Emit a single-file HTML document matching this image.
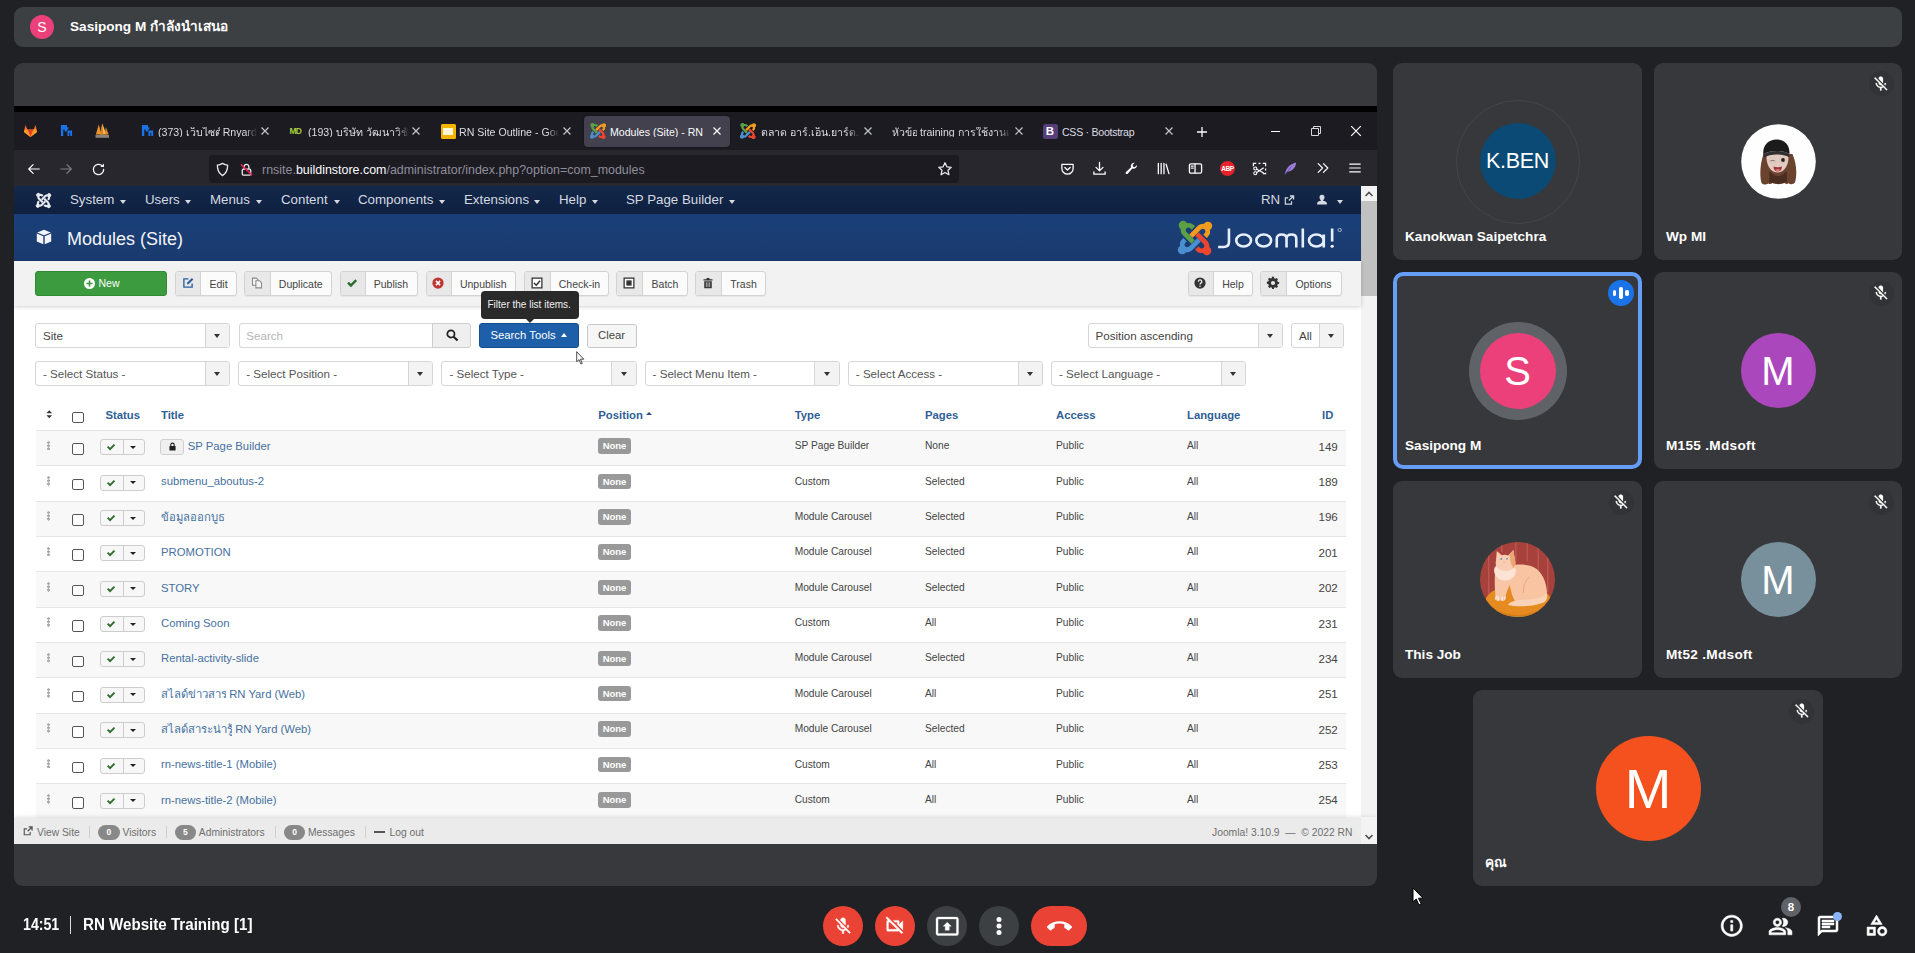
<!DOCTYPE html>
<html><head><meta charset="utf-8"><title>Meet</title><style>
*{box-sizing:border-box;margin:0;padding:0}
html,body{width:1915px;height:953px;overflow:hidden;background:#202124;font-family:"Liberation Sans",sans-serif;}
body{position:relative;color:#fff}
.abs{position:absolute}
.t{position:absolute;white-space:nowrap;line-height:1}
svg{position:absolute;overflow:visible}
#banner{left:14px;top:7px;width:1888px;height:40px;background:#3c4043;border-radius:9px}
#main{left:14px;top:63px;width:1363px;height:823px;background:#38393c;border-radius:9px;overflow:hidden}
.tile{position:absolute;background:#37383b;border-radius:9px}
.av{position:absolute;border-radius:50%;color:#fff;text-align:center}
.nm{position:absolute;left:12px;bottom:17px;font-size:13.6px;font-weight:bold;color:#fff;white-space:nowrap;line-height:1}
.mute{position:absolute;right:8px;top:8px;width:25px;height:25px;border-radius:50%;background:#323336}
.mute svg{left:3.7px;top:3.5px;width:17.6px;height:17.6px;fill:#fff}
#ss{left:0;top:43px;width:1363px;height:738px;background:#000;overflow:hidden}
.cbtn{position:absolute;top:906px;width:40px;height:40px;border-radius:50%}
.cbtn svg{left:10px;top:10px;width:20px;height:20px;fill:#fff}
.bi{fill:#fff;width:25px;height:25px}

.nmx{font-size:13.6px;font-weight:bold;color:#fff}
.mute{right:auto}

.tb{border:1px solid #d3d3d3;border-radius:3px;background:#fbfbfb;overflow:hidden;box-shadow:0 1px 1px rgba(0,0,0,.05)}
.tb i{position:absolute;left:0;top:0;bottom:0;background:#e8e8e8;border-right:1px solid #d3d3d3}
.tb b{position:absolute;right:0;top:0;bottom:0;text-align:center;font-weight:normal;font-size:10.5px;color:#444;line-height:24px}
.sl{border:1px solid #d6d6d6;border-radius:3px;background:#fff;overflow:hidden;font-size:11.6px;line-height:24px;white-space:nowrap}
.sl span{margin-left:7px}
.sl i{position:absolute;right:0;top:0;bottom:0;width:24.5px;background:#f3f3f3;border-left:1px solid #d6d6d6}
.sl i:after{content:"";position:absolute;left:8.5px;top:10px;border-left:3.5px solid transparent;border-right:3.5px solid transparent;border-top:4px solid #333}
.cb{width:11.5px;height:11.5px;border:1.3px solid #555;border-radius:2px;background:#fff}
.th{font-size:11.3px;font-weight:bold;color:#2f5f96}
.dh{width:5px;height:9.6px;background:radial-gradient(circle,#a8a8a8 1.1px,transparent 1.6px);background-size:5px 3.2px}
.sb2{width:45px;height:16px;border:1px solid #cdcdcd;border-radius:3px;background:#f7f7f7}
.sb2 i{position:absolute;left:22px;top:0;bottom:0;width:1px;background:#cdcdcd}
.sb2 u{position:absolute;left:29.5px;top:5.5px;border-left:3px solid transparent;border-right:3px solid transparent;border-top:3.5px solid #222}
.bdg{width:33px;height:15.5px;border-radius:3px;background:#999;color:#fff;font-size:9.5px;font-weight:bold;line-height:15.5px;text-align:center}
.sm{font-size:10.2px;color:#444}
.pl{width:21.5px;height:15.5px;border-radius:8px;background:#888;color:#fff;font-size:8.5px;font-weight:bold;line-height:15.5px;text-align:center}

.tw{display:inline-block;overflow-x:clip;overflow-y:visible;vertical-align:top;white-space:nowrap}
</style></head><body>
<div class="abs" id="banner"><div class="av" style="left:16px;top:8px;width:24px;height:24px;background:#ec407a;font-size:14px;line-height:24.5px">S</div><div class="t" style="left:56px;top:13px;font-size:13.6px;font-weight:bold">Sasipong M <span class="tw" style="width:77.5px">กำลังนำเสนอ</span></div></div>
<div class="abs" id="main"><div class="abs" id="ss">
<div class="abs" style="left:0;top:6px;width:1363px;height:38px;background:#1c1b22"></div><div class="abs" style="left:0;top:44px;width:1363px;height:36px;background:#28272e"></div><div class="abs" style="left:570px;top:9.5px;width:146px;height:31px;background:#42414d;border-radius:4px;box-shadow:0 0 2px rgba(0,0,0,.5)"></div><svg viewBox="0 0 16 16" style="left:8.5px;top:17px;width:15px;height:15px"><path d="M8 15L1 9.500l1.500-7.500 2.200 5h6.600l2.200-5L15 9.500z" fill="#fc6d26"/><path d="M8 15L4.700 7h6.600z" fill="#e24329"/><path d="M1 9.500L8 15 4.700 7H2z M15 9.500L8 15l3.300-8H14z" fill="#fca326" opacity=".9"/></svg><svg viewBox="0 0 14 14" style="left:45.5px;top:18px;width:13px;height:13px"><path d="M1 1h6.500v2.500H9V6H7.500v2H5V6H3.500v7H1z M8 7h5v6H11V9.500H10V13H8z" fill="#1a73e8"/></svg><svg viewBox="0 0 16 16" style="left:80px;top:16.5px;width:16px;height:16px"><path d="M4.800 1.500l2.700 10H1.800z" fill="#e9922f"/><path d="M8.300 .5l4.200 11H6.300z" fill="#f6c04f"/><path d="M8.300 .5l1 11H6.300z" fill="#d97f22"/><path d="M11.800 4l2.800 7.500h-3.600z" fill="#e88a2a"/><rect x="1.500" y="12" width="13.500" height="2.800" fill="#8d8378"/></svg><svg viewBox="0 0 14 14" style="left:126.5px;top:18px;width:13px;height:13px"><path d="M1 1h6.500v2.500H9V6H7.500v2H5V6H3.500v7H1z M8 7h5v6H11V9.500H10V13H8z" fill="#1a73e8"/></svg><div class="t" style="left:144px;top:20.8px;font-size:10.600px;color:#dcdce2;width:99px;overflow:hidden;-webkit-mask-image:linear-gradient(to right,#000 88%,transparent 100%);mask-image:linear-gradient(to right,#000 88%,transparent 100%);">(373) <span class="tw" style="width:34px">เว็บไซต์</span> Rnyard</div><svg viewBox="-6 -6 12 12" style="left:244.5px;top:19px;width:12px;height:12px"><path d="M-3.5-3.5L3.5 3.5M3.5-3.5L-3.5 3.5" stroke="#c4c4cc" stroke-width="1.2" fill="none"/></svg><div class="t" style="left:275.5px;top:21px;font-size:8.500px;font-weight:bold;color:#a4cf3a;letter-spacing:-.9px">MD</div><div class="t" style="left:294px;top:20.8px;font-size:10.600px;color:#dcdce2;width:101px;overflow:hidden;-webkit-mask-image:linear-gradient(to right,#000 88%,transparent 100%);mask-image:linear-gradient(to right,#000 88%,transparent 100%);">(193) บริษัท วัฒนาวิชั่น</div><svg viewBox="-6 -6 12 12" style="left:395.5px;top:19px;width:12px;height:12px"><path d="M-3.5-3.5L3.5 3.5M3.5-3.5L-3.5 3.5" stroke="#c4c4cc" stroke-width="1.2" fill="none"/></svg><div class="abs" style="left:426.5px;top:18px;width:15px;height:15px;background:#f4b400;border-radius:1.500px"><i class="abs" style="left:2.500px;top:4px;width:10px;height:7px;background:#fff7d6"></i></div><div class="t" style="left:445px;top:20.8px;font-size:10.600px;color:#dcdce2;width:100px;overflow:hidden;-webkit-mask-image:linear-gradient(to right,#000 88%,transparent 100%);mask-image:linear-gradient(to right,#000 88%,transparent 100%);">RN Site Outline - Goo</div><svg viewBox="-6 -6 12 12" style="left:546.5px;top:19px;width:12px;height:12px"><path d="M-3.5-3.5L3.5 3.5M3.5-3.5L-3.5 3.5" stroke="#c4c4cc" stroke-width="1.2" fill="none"/></svg><svg viewBox="-16 -16 32 32" style="left:576px;top:17px;width:16px;height:16px"><path transform="rotate(0)" fill="#5ba046" d="M-13.500-8.500a4.200 4.200 0 1 1 6-5.500c2-.600 4.500 0 6.200 1.700l1.300 1.300-3.200 3.200-1.300-1.300c-1-1-2.500-1-3.500 0s-1 2.500 0 3.500l7.800 7.800-3.200 3.200-7.800-7.800c-1.700-1.700-2.400-4-2.300-6.100z"/><path transform="rotate(90)" fill="#f29c1f" d="M-13.500-8.500a4.200 4.200 0 1 1 6-5.500c2-.600 4.500 0 6.200 1.700l1.300 1.300-3.200 3.200-1.300-1.300c-1-1-2.500-1-3.500 0s-1 2.500 0 3.500l7.800 7.800-3.200 3.200-7.800-7.800c-1.700-1.700-2.400-4-2.300-6.100z"/><path transform="rotate(180)" fill="#e9452f" d="M-13.500-8.500a4.200 4.200 0 1 1 6-5.500c2-.600 4.500 0 6.200 1.700l1.300 1.300-3.200 3.200-1.300-1.300c-1-1-2.500-1-3.500 0s-1 2.500 0 3.500l7.800 7.800-3.200 3.200-7.800-7.800c-1.700-1.700-2.400-4-2.300-6.100z"/><path transform="rotate(270)" fill="#4c8fd0" d="M-13.500-8.500a4.200 4.200 0 1 1 6-5.500c2-.600 4.500 0 6.200 1.700l1.300 1.300-3.200 3.200-1.300-1.300c-1-1-2.500-1-3.500 0s-1 2.500 0 3.500l7.800 7.800-3.200 3.200-7.800-7.800c-1.700-1.700-2.400-4-2.300-6.100z"/></svg><div class="t" style="left:596px;top:20.8px;font-size:10.600px;color:#fbfbfe;width:97px;overflow:hidden;">Modules (Site) - RN</div><svg viewBox="-6 -6 12 12" style="left:696.5px;top:19px;width:12px;height:12px"><path d="M-3.5-3.5L3.5 3.5M3.5-3.5L-3.5 3.5" stroke="#fbfbfe" stroke-width="1.2" fill="none"/></svg><svg viewBox="-16 -16 32 32" style="left:726px;top:17px;width:16px;height:16px"><path transform="rotate(0)" fill="#5ba046" d="M-13.500-8.500a4.200 4.200 0 1 1 6-5.500c2-.600 4.500 0 6.200 1.700l1.300 1.300-3.200 3.200-1.300-1.300c-1-1-2.500-1-3.500 0s-1 2.500 0 3.500l7.800 7.800-3.200 3.200-7.800-7.800c-1.700-1.700-2.400-4-2.300-6.100z"/><path transform="rotate(90)" fill="#f29c1f" d="M-13.500-8.500a4.200 4.200 0 1 1 6-5.500c2-.600 4.500 0 6.200 1.700l1.300 1.300-3.200 3.200-1.300-1.300c-1-1-2.500-1-3.500 0s-1 2.500 0 3.500l7.800 7.800-3.200 3.200-7.800-7.800c-1.700-1.700-2.400-4-2.300-6.100z"/><path transform="rotate(180)" fill="#e9452f" d="M-13.500-8.500a4.200 4.200 0 1 1 6-5.500c2-.600 4.500 0 6.200 1.700l1.300 1.300-3.200 3.200-1.300-1.300c-1-1-2.500-1-3.500 0s-1 2.500 0 3.500l7.800 7.800-3.200 3.200-7.800-7.800c-1.700-1.700-2.400-4-2.300-6.100z"/><path transform="rotate(270)" fill="#4c8fd0" d="M-13.500-8.500a4.200 4.200 0 1 1 6-5.500c2-.600 4.500 0 6.200 1.700l1.300 1.300-3.200 3.200-1.300-1.300c-1-1-2.500-1-3.500 0s-1 2.500 0 3.500l7.800 7.800-3.200 3.200-7.800-7.800c-1.700-1.700-2.400-4-2.300-6.100z"/></svg><div class="t" style="left:747px;top:20.8px;font-size:10.600px;color:#dcdce2;width:99px;overflow:hidden;-webkit-mask-image:linear-gradient(to right,#000 88%,transparent 100%);mask-image:linear-gradient(to right,#000 88%,transparent 100%);">ตลาด อาร์.เอ็น.ยาร์ด. โค</div><svg viewBox="-6 -6 12 12" style="left:847.5px;top:19px;width:12px;height:12px"><path d="M-3.5-3.5L3.5 3.5M3.5-3.5L-3.5 3.5" stroke="#c4c4cc" stroke-width="1.2" fill="none"/></svg><div class="t" style="left:878px;top:20.8px;font-size:10.600px;color:#dcdce2;width:119px;overflow:hidden;-webkit-mask-image:linear-gradient(to right,#000 88%,transparent 100%);mask-image:linear-gradient(to right,#000 88%,transparent 100%);"><span class="tw" style="width:25px">หัวข้อ</span> training การใช้งานเว็</div><svg viewBox="-6 -6 12 12" style="left:998.5px;top:19px;width:12px;height:12px"><path d="M-3.5-3.5L3.5 3.5M3.5-3.5L-3.5 3.5" stroke="#c4c4cc" stroke-width="1.2" fill="none"/></svg><div class="abs" style="left:1028.5px;top:17.5px;width:15px;height:15px;background:#563d7c;border-radius:2.500px;color:#fff;font-size:11.500px;font-weight:bold;line-height:15.500px;text-align:center">B</div><div class="t" style="left:1048px;top:20.8px;font-size:10.600px;color:#dcdce2;"><span style="letter-spacing:-.28px">CSS · Bootstrap</span></div><svg viewBox="-6 -6 12 12" style="left:1148.5px;top:19px;width:12px;height:12px"><path d="M-3.5-3.5L3.5 3.5M3.5-3.5L-3.5 3.5" stroke="#c4c4cc" stroke-width="1.2" fill="none"/></svg><svg viewBox="-6 -6 12 12" style="left:1181.5px;top:19.5px;width:12px;height:12px"><path d="M-5 0H5M0-5V5" stroke="#fbfbfe" stroke-width="1.300" fill="none"/></svg><div class="abs" style="left:1257px;top:24.5px;width:9px;height:1.200px;background:#fbfbfe"></div><svg viewBox="0 0 10 10" style="left:1296.5px;top:20px;width:10px;height:10px"><path d="M.5 2.500h7v7h-7z M2.500 2.500v-2h7v7h-2" stroke="#d8d8de" stroke-width="1" fill="none"/></svg><svg viewBox="-6 -6 12 12" style="left:1336px;top:19px;width:12px;height:12px"><path d="M-4.8-4.8L4.8 4.8M4.8-4.8L-4.8 4.8" stroke="#fbfbfe" stroke-width="1.2" fill="none"/></svg><svg viewBox="0 0 16 16" style="left:13px;top:56px;width:14px;height:14px;"><path d="M14 8H2.500M7 3L2 8l5 5" stroke="#fbfbfe" stroke-width="1.400" fill="none" stroke-linecap="round" stroke-linejoin="round"/></svg><svg viewBox="0 0 16 16" style="left:45px;top:56px;width:14px;height:14px;"><path d="M2 8h11.500M9 3l5 5-5 5" stroke="#7c7b86" stroke-width="1.400" fill="none" stroke-linecap="round" stroke-linejoin="round"/></svg><svg viewBox="0 0 16 16" style="left:77px;top:55.5px;width:15px;height:15px;"><path d="M13.500 8a5.500 5.500 0 1 1-1.700-4" stroke="#fbfbfe" stroke-width="1.400" fill="none" stroke-linecap="round" stroke-linejoin="round"/><path d="M13.800 1.500v3.800H10z" fill="#fbfbfe"/></svg><div class="abs" style="left:194.5px;top:48.5px;width:750.500px;height:28px;background:#1c1b22;border-radius:4px"></div><svg viewBox="0 0 16 16" style="left:200.5px;top:55.5px;width:15px;height:15px;"><path d="M8 1.500c2 1.300 3.800 1.800 5.500 1.800 0 5-1.500 9-5.500 11.200C4 12.300 2.500 8.300 2.500 3.300 4.200 3.300 6 2.800 8 1.500z" stroke="#e8e8ee" stroke-width="1.400" fill="none" stroke-linejoin="round"/></svg><svg viewBox="0 0 16 16" style="left:225px;top:55.5px;width:15px;height:15px;"><rect x="3.500" y="7.500" width="9" height="6.500" rx="1.200" stroke="#e8e8ee" stroke-width="1.400" fill="none"/><path d="M5.500 7.500V5a2.500 2.500 0 0 1 5 0v2.500" stroke="#e8e8ee" stroke-width="1.400" fill="none"/><path d="M2 2.500l12 11.500" stroke="#e22850" stroke-width="1.600"/></svg><div class="t" style="left:248px;top:58.2px;font-size:12.450px;color:#8f8e9c"><span>rnsite.</span><span style="color:#fbfbfe">buildinstore.com</span>/administrator/index.php?option=com_modules</div><svg viewBox="0 0 16 16" style="left:922.5px;top:54.5px;width:16px;height:16px;"><path d="M8 1.800l1.900 4 4.300.5-3.200 3 .9 4.400L8 11.500l-3.900 2.200.9-4.400-3.200-3 4.300-.5z" stroke="#e8e8ee" stroke-width="1.300" fill="none" stroke-linejoin="round"/></svg><svg viewBox="0 0 16 16" style="left:1046px;top:54.5px;width:15px;height:15px;"><path d="M2 3.500h12v4.500a6 6 0 0 1-12 0z" stroke="#fbfbfe" stroke-width="1.400" fill="none" stroke-linecap="round" stroke-linejoin="round"/><path d="M5.200 7l2.800 2.700L10.800 7" stroke="#fbfbfe" stroke-width="1.400" fill="none" stroke-linecap="round" stroke-linejoin="round"/></svg><svg viewBox="0 0 16 16" style="left:1077.5px;top:54.5px;width:15px;height:15px;"><path d="M8 1.500v8.500M4.300 6.800L8 10.500l3.700-3.700M2 11.500v2.500h12v-2.500" stroke="#fbfbfe" stroke-width="1.400" fill="none" stroke-linecap="round" stroke-linejoin="round"/></svg><svg viewBox="0 0 16 16" style="left:1109.5px;top:54.5px;width:15px;height:15px;"><path d="M13.800 4.200a3.600 3.600 0 0 1-4.900 3.900L4 13.500a1.300 1.300 0 0 1-1.900-1.900l5.400-4.900a3.600 3.600 0 0 1 3.900-4.900L9.300 4l.4 2 2 .4z" fill="#fbfbfe"/></svg><svg viewBox="0 0 16 16" style="left:1141.5px;top:54.5px;width:15px;height:15px;"><path d="M2.500 2.500v11M5.500 2.500v11M8.500 2.500v11M10.800 3.500l3 10" stroke="#fbfbfe" stroke-width="1.400" fill="none" stroke-linecap="round" stroke-linejoin="round"/></svg><svg viewBox="0 0 16 16" style="left:1173.5px;top:54.5px;width:15px;height:15px;"><rect x="1.500" y="3" width="13" height="10" rx="1.500" stroke="#fbfbfe" stroke-width="1.400" fill="none" stroke-linecap="round" stroke-linejoin="round"/><path d="M7.500 3v10M3.500 5.500h2M3.500 7.500h2" stroke="#fbfbfe" stroke-width="1.400" fill="none" stroke-linecap="round" stroke-linejoin="round"/></svg><div class="abs" style="left:1206px;top:55px;width:15px;height:15px;border-radius:50%;background:#e8222d;color:#fff;font-size:6.500px;font-weight:bold;line-height:15.500px;text-align:center;letter-spacing:-.4px">ABP</div><svg viewBox="0 0 16 16" style="left:1237.5px;top:54.5px;width:15px;height:15px;"><path d="M1.500 5.500v-3h3M7 2.500h2M11.500 2.500h3v3M14.500 8v2M14.500 12.500v1h-3" stroke="#fbfbfe" stroke-width="1.300" fill="none"/><circle cx="3.500" cy="8" r="1.600" stroke="#fbfbfe" stroke-width="1.200" fill="none"/><circle cx="3.500" cy="13" r="1.600" stroke="#fbfbfe" stroke-width="1.200" fill="none"/><path d="M5 8.800l7.500 4M5 12.200l7.500-5" stroke="#fbfbfe" stroke-width="1.200"/></svg><svg viewBox="0 0 16 16" style="left:1269px;top:54.5px;width:15px;height:15px;"><path d="M2 14c1-6 5-11 12-12.500C13.500 8 9 11 4.500 11.500z" fill="#9b7fd6"/><path d="M2 14.500L9 6" stroke="#6a4fb0" stroke-width="1"/></svg><svg viewBox="0 0 16 16" style="left:1301.5px;top:55.3px;width:14px;height:14px;"><path d="M2.500 3l5 5-5 5M8.500 3l5 5-5 5" stroke="#fbfbfe" stroke-width="1.400" fill="none" stroke-linecap="round" stroke-linejoin="round"/></svg><svg viewBox="0 0 16 16" style="left:1333.5px;top:55.3px;width:14px;height:14px;"><path d="M2 3.500h12M2 8h12M2 12.500h12" stroke="#fbfbfe" stroke-width="1.400" fill="none" stroke-linecap="round" stroke-linejoin="round"/></svg>
<div class="abs" style="left:0;top:80px;width:1347px;height:658px;background:#fff"></div><div class="abs" style="left:1347px;top:80px;width:16px;height:658px;background:#f3f3f3"></div><div class="abs" style="left:1347px;top:95px;width:16px;height:95px;background:#c1c1c1"></div><svg viewBox="0 0 16 14" style="left:1347px;top:81px;width:16px;height:14px"><path d="M4.500 9L8 5.500 11.500 9" stroke="#505050" stroke-width="1.600" fill="none"/></svg><svg viewBox="0 0 16 14" style="left:1347px;top:724px;width:16px;height:14px"><path d="M4.500 5L8 8.500 11.500 5" stroke="#505050" stroke-width="1.600" fill="none"/></svg><div class="abs" style="left:0;top:80px;width:1347px;height:28px;background:linear-gradient(#13284a,#0f2040)"></div><div class="abs" style="left:0;top:108px;width:1347px;height:47px;background:linear-gradient(#1a4079,#1a3a6e)"></div><svg viewBox="-16 -16 32 32" style="left:21.5px;top:86.5px;width:15px;height:15px"><path transform="rotate(0)" fill="#e6e9ee" d="M-13.500-8.500a4.200 4.200 0 1 1 6-5.500c2-.600 4.500 0 6.200 1.700l1.300 1.300-3.200 3.200-1.300-1.300c-1-1-2.500-1-3.500 0s-1 2.500 0 3.500l7.800 7.800-3.200 3.200-7.800-7.800c-1.700-1.700-2.400-4-2.300-6.100z"/><path transform="rotate(90)" fill="#e6e9ee" d="M-13.500-8.500a4.200 4.200 0 1 1 6-5.500c2-.600 4.500 0 6.200 1.700l1.300 1.300-3.200 3.200-1.300-1.300c-1-1-2.500-1-3.500 0s-1 2.500 0 3.500l7.800 7.800-3.200 3.200-7.800-7.800c-1.700-1.700-2.400-4-2.300-6.100z"/><path transform="rotate(180)" fill="#e6e9ee" d="M-13.500-8.500a4.200 4.200 0 1 1 6-5.500c2-.600 4.500 0 6.200 1.700l1.300 1.300-3.200 3.200-1.300-1.300c-1-1-2.500-1-3.500 0s-1 2.500 0 3.500l7.800 7.800-3.200 3.200-7.800-7.800c-1.700-1.700-2.400-4-2.300-6.100z"/><path transform="rotate(270)" fill="#e6e9ee" d="M-13.500-8.500a4.200 4.200 0 1 1 6-5.500c2-.600 4.500 0 6.200 1.700l1.300 1.300-3.200 3.200-1.300-1.300c-1-1-2.500-1-3.500 0s-1 2.500 0 3.500l7.800 7.800-3.200 3.200-7.800-7.800c-1.700-1.700-2.400-4-2.300-6.100z"/></svg><div class="t" style="left:56px;top:87.2px;font-size:13.300px;color:#d5d9e0">System</div><div class="abs" style="left:105.5px;top:93.5px;border-left:3.500px solid transparent;border-right:3.500px solid transparent;border-top:4px solid #d5d9e0"></div><div class="t" style="left:131px;top:87.2px;font-size:13.300px;color:#d5d9e0">Users</div><div class="abs" style="left:170.5px;top:93.5px;border-left:3.500px solid transparent;border-right:3.500px solid transparent;border-top:4px solid #d5d9e0"></div><div class="t" style="left:196px;top:87.2px;font-size:13.300px;color:#d5d9e0">Menus</div><div class="abs" style="left:241.5px;top:93.5px;border-left:3.500px solid transparent;border-right:3.500px solid transparent;border-top:4px solid #d5d9e0"></div><div class="t" style="left:267px;top:87.2px;font-size:13.300px;color:#d5d9e0">Content</div><div class="abs" style="left:319.5px;top:93.5px;border-left:3.500px solid transparent;border-right:3.500px solid transparent;border-top:4px solid #d5d9e0"></div><div class="t" style="left:344px;top:87.2px;font-size:13.300px;color:#d5d9e0">Components</div><div class="abs" style="left:424.5px;top:93.5px;border-left:3.500px solid transparent;border-right:3.500px solid transparent;border-top:4px solid #d5d9e0"></div><div class="t" style="left:450px;top:87.2px;font-size:13.300px;color:#d5d9e0">Extensions</div><div class="abs" style="left:519.5px;top:93.5px;border-left:3.500px solid transparent;border-right:3.500px solid transparent;border-top:4px solid #d5d9e0"></div><div class="t" style="left:545px;top:87.2px;font-size:13.300px;color:#d5d9e0">Help</div><div class="abs" style="left:577.5px;top:93.5px;border-left:3.500px solid transparent;border-right:3.500px solid transparent;border-top:4px solid #d5d9e0"></div><div class="t" style="left:612px;top:87.2px;font-size:13.300px;color:#d5d9e0">SP Page Builder</div><div class="abs" style="left:714.5px;top:93.5px;border-left:3.500px solid transparent;border-right:3.500px solid transparent;border-top:4px solid #d5d9e0"></div><div class="t" style="left:1247px;top:87.2px;font-size:13.300px;color:#d5d9e0">RN</div><svg viewBox="0 0 16 16" style="left:1270px;top:89px;width:10.500px;height:10.500px"><path d="M9 1.500h5.500V7M14.500 1.500L7.500 8.500" stroke="#d5d9e0" stroke-width="2" fill="none"/><path d="M11.500 9.500v4.500h-9.500v-9.500h4.500" stroke="#d5d9e0" stroke-width="1.800" fill="none"/></svg><svg viewBox="0 0 16 16" style="left:1302px;top:88px;width:12px;height:12px"><path d="M8 1a3.300 3.300 0 0 1 3.300 3.500c0 1.600-.9 3-1.800 3.600v.9c2 .4 5 1.400 5 3.300V14h-13v-1.700c0-1.900 3-2.900 5-3.300v-.9c-.9-.6-1.800-2-1.800-3.600A3.300 3.300 0 0 1 8 1z" fill="#d5d9e0"/></svg><div class="abs" style="left:1322.5px;top:93.5px;border-left:3.500px solid transparent;border-right:3.500px solid transparent;border-top:4px solid #d5d9e0"></div><svg viewBox="0 0 16 16" style="left:22px;top:123px;width:16px;height:16px"><path d="M8 .8l6.800 2.700L8 6.300 1.200 3.500z M.8 4.600l6.500 2.700v8L.8 12.500z M15.200 4.600L8.700 7.300v8l6.500-2.800z" fill="#f2f4f7"/></svg><div class="t" style="left:53px;top:123.8px;font-size:18px;color:#f2f4f7">Modules (Site)</div><svg viewBox="-16 -16 32 32" style="left:1164px;top:115px;width:34px;height:34px"><path transform="rotate(0)" fill="#5ba046" d="M-13.500-8.500a4.200 4.200 0 1 1 6-5.500c2-.600 4.500 0 6.200 1.700l1.300 1.300-3.200 3.200-1.300-1.300c-1-1-2.500-1-3.500 0s-1 2.500 0 3.500l7.800 7.800-3.200 3.200-7.800-7.800c-1.700-1.700-2.400-4-2.300-6.100z"/><path transform="rotate(90)" fill="#f29c1f" d="M-13.500-8.500a4.200 4.200 0 1 1 6-5.500c2-.600 4.500 0 6.200 1.700l1.300 1.300-3.200 3.200-1.300-1.300c-1-1-2.500-1-3.500 0s-1 2.500 0 3.500l7.800 7.800-3.200 3.200-7.800-7.800c-1.700-1.700-2.400-4-2.300-6.100z"/><path transform="rotate(180)" fill="#e9452f" d="M-13.500-8.500a4.200 4.200 0 1 1 6-5.500c2-.600 4.500 0 6.200 1.700l1.300 1.300-3.200 3.200-1.300-1.300c-1-1-2.500-1-3.500 0s-1 2.500 0 3.500l7.800 7.800-3.200 3.200-7.800-7.800c-1.700-1.700-2.400-4-2.300-6.100z"/><path transform="rotate(270)" fill="#4c8fd0" d="M-13.500-8.500a4.200 4.200 0 1 1 6-5.500c2-.600 4.500 0 6.200 1.700l1.300 1.300-3.200 3.200-1.300-1.300c-1-1-2.500-1-3.500 0s-1 2.500 0 3.500l7.800 7.800-3.200 3.200-7.800-7.800c-1.700-1.700-2.400-4-2.300-6.100z"/></svg><svg viewBox="0 0 116 24" preserveAspectRatio="none" style="left:1203px;top:120.5px;width:126px;height:24px"><g stroke="#e6eefb" stroke-width="2.400" fill="none" stroke-linecap="butt"><path d="M11 1.500v13.500c0 3.300-2 5-5 5H1"/><ellipse cx="24.500" cy="13.500" rx="6.800" ry="6"/><ellipse cx="43" cy="13.500" rx="6.800" ry="6"/><path d="M55 20.500v-9c0-2.500 1.500-4 4.500-4s4.500 1.500 4.500 4v9M64 11.500c0-2.500 1.500-4 4.500-4s4.500 1.500 4.500 4v9"/><path d="M79 1.500v19"/><ellipse cx="91.500" cy="13.500" rx="6.800" ry="6"/><path d="M98.300 7.500v13"/><path d="M106 1.500v13"/></g><circle cx="106" cy="19.300" r="1.500" fill="#f2f4f7"/><circle cx="113" cy="3" r="1.600" stroke="#cfd6e2" stroke-width=".700" fill="none"/></svg><div class="abs" style="left:0;top:155px;width:1347px;height:45px;background:#f2f2f2;box-shadow:0 1px 4px rgba(0,0,0,.18)"></div><div class="abs" style="left:21px;top:165px;width:132px;height:24.500px;background:#3c9a3f;border:1px solid #2f8a33;border-radius:3px"></div><svg viewBox="0 0 16 16" style="left:70px;top:171.5px;width:11px;height:11px"><circle cx="8" cy="8" r="8" fill="#fff"/><path d="M8 3.500v9M3.500 8h9" stroke="#3c9a3f" stroke-width="2.400"/></svg><div class="t" style="left:84.5px;top:172px;font-size:10.500px;color:#fff">New</div><div class="abs tb" style="left:161px;top:165.2px;width:62px;height:24.500px"><i style="width:25px"></i><b style="left:25px">Edit</b></div><svg viewBox="0 0 16 16" style="left:167.5px;top:170.5px;width:12px;height:12px"><path d="M13.500 8.500v5h-11v-11h6" stroke="#2b5f9c" stroke-width="1.800" fill="none"/><path d="M6.500 10l.6-2.600 6-6 2 2-6 6z" fill="#2b5f9c"/></svg><div class="abs tb" style="left:230px;top:165.2px;width:88px;height:24.500px"><i style="width:25.5px"></i><b style="left:25.5px">Duplicate</b></div><svg viewBox="0 0 16 16" style="left:236.75px;top:170.5px;width:12px;height:12px"><path d="M2 1.500h5l2.500 2.500v7H2z" stroke="#888" stroke-width="1.400" fill="#f4f4f4"/><path d="M6.500 5h5l2.500 2.500v7H6.500z" stroke="#888" stroke-width="1.400" fill="#f4f4f4"/></svg><div class="abs tb" style="left:325.5px;top:165.2px;width:78px;height:24.500px"><i style="width:25px"></i><b style="left:25px">Publish</b></div><svg viewBox="0 0 16 16" style="left:332px;top:170.5px;width:12px;height:12px"><path d="M1.500 8.500l2.200-2.200 2.800 2.800 6-6L14.700 5.300 6.500 13.500z" fill="#2f6d2f"/></svg><div class="abs tb" style="left:411.5px;top:165.2px;width:90px;height:24.500px"><i style="width:25.5px"></i><b style="left:25.5px">Unpublish</b></div><svg viewBox="0 0 16 16" style="left:418.25px;top:170.5px;width:12px;height:12px"><circle cx="8" cy="8" r="7.500" fill="#bd362f"/><path d="M5.200 5.200l5.600 5.600M10.800 5.200l-5.600 5.600" stroke="#fff" stroke-width="2"/></svg><div class="abs tb" style="left:510px;top:165.2px;width:85px;height:24.500px"><i style="width:26px"></i><b style="left:26px">Check-in</b></div><svg viewBox="0 0 16 16" style="left:517px;top:170.5px;width:12px;height:12px"><rect x="1.500" y="1.500" width="13" height="13" stroke="#333" stroke-width="1.700" fill="#fff"/><path d="M4 8l3 3 5-6" stroke="#333" stroke-width="2" fill="none"/></svg><div class="abs tb" style="left:602px;top:165.2px;width:72px;height:24.500px"><i style="width:26px"></i><b style="left:26px">Batch</b></div><svg viewBox="0 0 16 16" style="left:609px;top:170.5px;width:12px;height:12px"><rect x="1.500" y="1.500" width="13" height="13" stroke="#333" stroke-width="1.700" fill="#fff"/><rect x="4.500" y="4.500" width="7" height="7" fill="#333"/></svg><div class="abs tb" style="left:680.5px;top:165.2px;width:71.5px;height:24.500px"><i style="width:26.5px"></i><b style="left:26.5px">Trash</b></div><svg viewBox="0 0 16 16" style="left:687.75px;top:170.5px;width:12px;height:12px"><path d="M2 3h12v1.800H2z M6 1.200h4V3H6z M3 5.500h10V15H3z" fill="#333"/><path d="M5.800 7v6.500M8 7v6.500M10.200 7v6.500" stroke="#e9e9e9" stroke-width=".900"/></svg><div class="abs tb" style="left:1173.5px;top:165.2px;width:65.5px;height:24.500px"><i style="width:25.5px"></i><b style="left:25.5px">Help</b></div><svg viewBox="0 0 16 16" style="left:1180.25px;top:170.5px;width:12px;height:12px"><circle cx="8" cy="8" r="7.500" fill="#333"/><path d="M5.800 6.200a2.300 2.300 0 1 1 3.400 2c-.8.500-1.200.9-1.200 1.800" stroke="#f0f0f0" stroke-width="1.700" fill="none"/><circle cx="8" cy="12.200" r="1" fill="#f0f0f0"/></svg><div class="abs tb" style="left:1246px;top:165.2px;width:81.5px;height:24.500px"><i style="width:25.5px"></i><b style="left:25.5px">Options</b></div><svg viewBox="0 0 16 16" style="left:1252.75px;top:170.5px;width:12px;height:12px"><path d="M8 0l1.200.2.500 2 1.400.6 1.800-1 1.700 1.700-1 1.800.6 1.400 2 .5v2.400l-2 .5-.6 1.400 1 1.800-1.700 1.700-1.800-1-1.400.6-.5 2H6.800l-.5-2-1.400-.6-1.800 1-1.700-1.700 1-1.800-.6-1.400-2-.5V6.800l2-.5.6-1.400-1-1.800 1.700-1.700 1.800 1 1.400-.6.5-2z" fill="#333" transform="translate(0 -.5)"/><circle cx="8" cy="8" r="2.800" fill="#e9e9e9"/></svg><div class="abs sl" style="left:21px;top:217px;width:195px;height:24.500px"><span style="color:#444">Site</span><i></i></div><div class="abs sl" style="left:225.3px;top:217px;width:194px;height:24.500px;border-radius:3px 0 0 3px"><span style="color:#b5b5b5;margin-left:6px">Search</span></div><div class="abs" style="left:418.3px;top:217px;width:39px;height:24.500px;border:1px solid #cdcdcd;border-radius:0 3px 3px 0;background:#efefef"></div><svg viewBox="0 0 16 16" style="left:432px;top:223px;width:12.500px;height:12.500px"><circle cx="6.300" cy="6.300" r="4.600" stroke="#222" stroke-width="2.200" fill="none"/><path d="M9.800 9.800l5 5" stroke="#222" stroke-width="2.800"/></svg><div class="abs" style="left:464.5px;top:216.5px;width:100px;height:25.500px;background:#1d5fa8;border:1px solid #174e8c;border-radius:3px"></div><div class="t" style="left:476.5px;top:224px;font-size:11.300px;color:#fff">Search Tools</div><div class="abs" style="left:547px;top:227px;border-left:3.500px solid transparent;border-right:3.500px solid transparent;border-bottom:4px solid #fff"></div><div class="abs" style="left:573px;top:217.5px;width:49.500px;height:24px;background:#f6f6f6;border:1px solid #c8c8c8;border-radius:3px"></div><div class="t" style="left:584px;top:224px;font-size:11.300px;color:#444">Clear</div><div class="abs" style="left:466.5px;top:185px;width:98px;height:28px;background:#2a2a2a;border-radius:4px"></div><div class="abs" style="left:511.5px;top:213px;border-left:4px solid transparent;border-right:4px solid transparent;border-top:4px solid #2a2a2a"></div><div class="t" style="left:473.5px;top:194px;font-size:10px;color:#f0f0f0">Filter the list items.</div><div class="abs sl" style="left:1073.5px;top:217px;width:195.5px;height:24.500px"><span style="color:#444">Position ascending</span><i></i></div><div class="abs sl" style="left:1277px;top:217px;width:53.2px;height:24.500px"><span style="color:#444">All</span><i></i></div><div class="abs sl" style="left:21px;top:255px;width:195.3px;height:24.500px"><span style="color:#555">- Select Status -</span><i></i></div><div class="abs sl" style="left:224.2px;top:255px;width:195.3px;height:24.500px"><span style="color:#555">- Select Position -</span><i></i></div><div class="abs sl" style="left:427.4px;top:255px;width:195.3px;height:24.500px"><span style="color:#555">- Select Type -</span><i></i></div><div class="abs sl" style="left:630.6px;top:255px;width:195.3px;height:24.500px"><span style="color:#555">- Select Menu Item -</span><i></i></div><div class="abs sl" style="left:833.8px;top:255px;width:195.3px;height:24.500px"><span style="color:#555">- Select Access -</span><i></i></div><div class="abs sl" style="left:1037px;top:255px;width:195.3px;height:24.500px"><span style="color:#555">- Select Language -</span><i></i></div><svg viewBox="0 0 9 14" style="left:561.5px;top:244.5px;width:9px;height:14px"><path d="M.7.700v10l2.300-2 1.900 4.300 1.400-.6L4.400 8.200H7.800z" fill="#fff" stroke="#222" stroke-width=".800"/></svg><svg viewBox="0 0 8 10" style="left:31.5px;top:303.5px;width:6.500px;height:8.500px"><path d="M4 0l3.500 3.800h-7z M4 10L.5 6.200h7z" fill="#333"/></svg><div class="abs cb" style="left:58px;top:305.5px"></div><div class="t th" style="left:91.5px;top:303.6px">Status</div><div class="t th" style="left:147px;top:303.6px">Title</div><div class="t th" style="left:584.3px;top:303.6px">Position</div><div class="t th" style="left:780.7px;top:303.6px">Type</div><div class="t th" style="left:911px;top:303.6px">Pages</div><div class="t th" style="left:1042px;top:303.6px">Access</div><div class="t th" style="left:1173px;top:303.6px">Language</div><div class="t th" style="left:1308px;top:303.6px">ID</div><div class="abs" style="left:632px;top:306px;border-left:3px solid transparent;border-right:3px solid transparent;border-bottom:3.500px solid #2b4f7d"></div><div class="abs" style="left:22px;top:323.8px;width:1310px;height:35.36px;border-top:1px solid #e6e6e6;background:#f8f8f8"></div><div class="abs dh" style="left:32.3px;top:334.6px"></div><div class="abs cb" style="left:58px;top:337.4px"></div><div class="abs sb2" style="left:85.5px;top:333.3px"><i></i><u></u></div><svg viewBox="0 0 16 16" style="left:91.5px;top:336.3px;width:10px;height:10px"><path d="M1.500 8.500l2.200-2.200 2.800 2.800 6-6L14.700 5.300 6.500 13.500z" fill="#2f6d2f"/></svg><div class="abs" style="left:146.3px;top:333.4px;width:24px;height:15.500px;border:1px solid #d0d0d0;border-radius:3px;background:#f0f0f0"></div><svg viewBox="0 0 16 16" style="left:153.8px;top:336px;width:9px;height:9px"><rect x="2.500" y="7" width="11" height="8" rx="1" fill="#222"/><path d="M5 7V5a3 3 0 0 1 6 0v2" stroke="#222" stroke-width="2" fill="none"/></svg><div class="t" style="left:173.8px;top:335.1px;font-size:11.300px;color:#46719f">SP Page Builder</div><div class="abs bdg" style="left:584px;top:332.4px">None</div><div class="t sm" style="left:780.7px;top:335.3px">SP Page Builder</div><div class="t sm" style="left:911px;top:335.3px">None</div><div class="t sm" style="left:1042px;top:335.3px">Public</div><div class="t sm" style="left:1173px;top:335.3px">All</div><div class="t" style="left:1304.3px;top:334.7px;width:19.500px;text-align:right;font-size:11.600px;color:#444">149</div><div class="abs" style="left:22px;top:359.16px;width:1310px;height:35.36px;border-top:1px solid #e6e6e6;background:#fff"></div><div class="abs dh" style="left:32.3px;top:369.96px"></div><div class="abs cb" style="left:58px;top:372.76px"></div><div class="abs sb2" style="left:85.5px;top:368.66px"><i></i><u></u></div><svg viewBox="0 0 16 16" style="left:91.5px;top:371.66px;width:10px;height:10px"><path d="M1.500 8.500l2.200-2.200 2.800 2.800 6-6L14.700 5.300 6.500 13.500z" fill="#2f6d2f"/></svg><div class="t" style="left:147px;top:370.46px;font-size:11.300px;color:#46719f">submenu_aboutus-2</div><div class="abs bdg" style="left:584px;top:367.76px">None</div><div class="t sm" style="left:780.7px;top:370.66px">Custom</div><div class="t sm" style="left:911px;top:370.66px">Selected</div><div class="t sm" style="left:1042px;top:370.66px">Public</div><div class="t sm" style="left:1173px;top:370.66px">All</div><div class="t" style="left:1304.3px;top:370.06px;width:19.500px;text-align:right;font-size:11.600px;color:#444">189</div><div class="abs" style="left:22px;top:394.52px;width:1310px;height:35.36px;border-top:1px solid #e6e6e6;background:#f8f8f8"></div><div class="abs dh" style="left:32.3px;top:405.32px"></div><div class="abs cb" style="left:58px;top:408.12px"></div><div class="abs sb2" style="left:85.5px;top:404.02px"><i></i><u></u></div><svg viewBox="0 0 16 16" style="left:91.5px;top:407.02px;width:10px;height:10px"><path d="M1.500 8.500l2.200-2.200 2.800 2.800 6-6L14.700 5.300 6.500 13.500z" fill="#2f6d2f"/></svg><div class="t" style="left:147px;top:405.82px;font-size:11.300px;color:#46719f"><span class="tw" style="width:63.5px">ข้อมูลออกบูธ</span></div><div class="abs bdg" style="left:584px;top:403.12px">None</div><div class="t sm" style="left:780.7px;top:406.02px">Module Carousel</div><div class="t sm" style="left:911px;top:406.02px">Selected</div><div class="t sm" style="left:1042px;top:406.02px">Public</div><div class="t sm" style="left:1173px;top:406.02px">All</div><div class="t" style="left:1304.3px;top:405.42px;width:19.500px;text-align:right;font-size:11.600px;color:#444">196</div><div class="abs" style="left:22px;top:429.88px;width:1310px;height:35.36px;border-top:1px solid #e6e6e6;background:#fff"></div><div class="abs dh" style="left:32.3px;top:440.68px"></div><div class="abs cb" style="left:58px;top:443.48px"></div><div class="abs sb2" style="left:85.5px;top:439.38px"><i></i><u></u></div><svg viewBox="0 0 16 16" style="left:91.5px;top:442.38px;width:10px;height:10px"><path d="M1.500 8.500l2.200-2.200 2.800 2.800 6-6L14.700 5.300 6.500 13.500z" fill="#2f6d2f"/></svg><div class="t" style="left:147px;top:441.18px;font-size:11.300px;color:#46719f">PROMOTION</div><div class="abs bdg" style="left:584px;top:438.48px">None</div><div class="t sm" style="left:780.7px;top:441.38px">Module Carousel</div><div class="t sm" style="left:911px;top:441.38px">Selected</div><div class="t sm" style="left:1042px;top:441.38px">Public</div><div class="t sm" style="left:1173px;top:441.38px">All</div><div class="t" style="left:1304.3px;top:440.78px;width:19.500px;text-align:right;font-size:11.600px;color:#444">201</div><div class="abs" style="left:22px;top:465.24px;width:1310px;height:35.36px;border-top:1px solid #e6e6e6;background:#f8f8f8"></div><div class="abs dh" style="left:32.3px;top:476.04px"></div><div class="abs cb" style="left:58px;top:478.84px"></div><div class="abs sb2" style="left:85.5px;top:474.74px"><i></i><u></u></div><svg viewBox="0 0 16 16" style="left:91.5px;top:477.74px;width:10px;height:10px"><path d="M1.500 8.500l2.200-2.200 2.800 2.800 6-6L14.700 5.300 6.500 13.500z" fill="#2f6d2f"/></svg><div class="t" style="left:147px;top:476.54px;font-size:11.300px;color:#46719f">STORY</div><div class="abs bdg" style="left:584px;top:473.84px">None</div><div class="t sm" style="left:780.7px;top:476.74px">Module Carousel</div><div class="t sm" style="left:911px;top:476.74px">Selected</div><div class="t sm" style="left:1042px;top:476.74px">Public</div><div class="t sm" style="left:1173px;top:476.74px">All</div><div class="t" style="left:1304.3px;top:476.14px;width:19.500px;text-align:right;font-size:11.600px;color:#444">202</div><div class="abs" style="left:22px;top:500.6px;width:1310px;height:35.36px;border-top:1px solid #e6e6e6;background:#fff"></div><div class="abs dh" style="left:32.3px;top:511.4px"></div><div class="abs cb" style="left:58px;top:514.2px"></div><div class="abs sb2" style="left:85.5px;top:510.1px"><i></i><u></u></div><svg viewBox="0 0 16 16" style="left:91.5px;top:513.1px;width:10px;height:10px"><path d="M1.500 8.500l2.200-2.200 2.800 2.800 6-6L14.700 5.300 6.500 13.500z" fill="#2f6d2f"/></svg><div class="t" style="left:147px;top:511.9px;font-size:11.300px;color:#46719f">Coming Soon</div><div class="abs bdg" style="left:584px;top:509.2px">None</div><div class="t sm" style="left:780.7px;top:512.1px">Custom</div><div class="t sm" style="left:911px;top:512.1px">All</div><div class="t sm" style="left:1042px;top:512.1px">Public</div><div class="t sm" style="left:1173px;top:512.1px">All</div><div class="t" style="left:1304.3px;top:511.5px;width:19.500px;text-align:right;font-size:11.600px;color:#444">231</div><div class="abs" style="left:22px;top:535.96px;width:1310px;height:35.36px;border-top:1px solid #e6e6e6;background:#f8f8f8"></div><div class="abs dh" style="left:32.3px;top:546.76px"></div><div class="abs cb" style="left:58px;top:549.56px"></div><div class="abs sb2" style="left:85.5px;top:545.46px"><i></i><u></u></div><svg viewBox="0 0 16 16" style="left:91.5px;top:548.46px;width:10px;height:10px"><path d="M1.500 8.500l2.200-2.200 2.800 2.800 6-6L14.700 5.300 6.500 13.500z" fill="#2f6d2f"/></svg><div class="t" style="left:147px;top:547.26px;font-size:11.300px;color:#46719f">Rental-activity-slide</div><div class="abs bdg" style="left:584px;top:544.56px">None</div><div class="t sm" style="left:780.7px;top:547.46px">Module Carousel</div><div class="t sm" style="left:911px;top:547.46px">Selected</div><div class="t sm" style="left:1042px;top:547.46px">Public</div><div class="t sm" style="left:1173px;top:547.46px">All</div><div class="t" style="left:1304.3px;top:546.86px;width:19.500px;text-align:right;font-size:11.600px;color:#444">234</div><div class="abs" style="left:22px;top:571.32px;width:1310px;height:35.36px;border-top:1px solid #e6e6e6;background:#fff"></div><div class="abs dh" style="left:32.3px;top:582.12px"></div><div class="abs cb" style="left:58px;top:584.92px"></div><div class="abs sb2" style="left:85.5px;top:580.82px"><i></i><u></u></div><svg viewBox="0 0 16 16" style="left:91.5px;top:583.82px;width:10px;height:10px"><path d="M1.500 8.500l2.200-2.200 2.800 2.800 6-6L14.700 5.300 6.500 13.500z" fill="#2f6d2f"/></svg><div class="t" style="left:147px;top:582.62px;font-size:11.300px;color:#46719f"><span class="tw" style="width:65px">สไลด์ข่าวสาร</span> RN Yard (Web)</div><div class="abs bdg" style="left:584px;top:579.92px">None</div><div class="t sm" style="left:780.7px;top:582.82px">Module Carousel</div><div class="t sm" style="left:911px;top:582.82px">All</div><div class="t sm" style="left:1042px;top:582.82px">Public</div><div class="t sm" style="left:1173px;top:582.82px">All</div><div class="t" style="left:1304.3px;top:582.22px;width:19.500px;text-align:right;font-size:11.600px;color:#444">251</div><div class="abs" style="left:22px;top:606.68px;width:1310px;height:35.36px;border-top:1px solid #e6e6e6;background:#f8f8f8"></div><div class="abs dh" style="left:32.3px;top:617.48px"></div><div class="abs cb" style="left:58px;top:620.28px"></div><div class="abs sb2" style="left:85.5px;top:616.18px"><i></i><u></u></div><svg viewBox="0 0 16 16" style="left:91.5px;top:619.18px;width:10px;height:10px"><path d="M1.500 8.500l2.200-2.200 2.800 2.800 6-6L14.700 5.300 6.500 13.500z" fill="#2f6d2f"/></svg><div class="t" style="left:147px;top:617.98px;font-size:11.300px;color:#46719f"><span class="tw" style="width:71px">สไลด์สาระน่ารู้</span> RN Yard (Web)</div><div class="abs bdg" style="left:584px;top:615.28px">None</div><div class="t sm" style="left:780.7px;top:618.18px">Module Carousel</div><div class="t sm" style="left:911px;top:618.18px">Selected</div><div class="t sm" style="left:1042px;top:618.18px">Public</div><div class="t sm" style="left:1173px;top:618.18px">All</div><div class="t" style="left:1304.3px;top:617.58px;width:19.500px;text-align:right;font-size:11.600px;color:#444">252</div><div class="abs" style="left:22px;top:642.04px;width:1310px;height:35.36px;border-top:1px solid #e6e6e6;background:#fff"></div><div class="abs dh" style="left:32.3px;top:652.84px"></div><div class="abs cb" style="left:58px;top:655.64px"></div><div class="abs sb2" style="left:85.5px;top:651.54px"><i></i><u></u></div><svg viewBox="0 0 16 16" style="left:91.5px;top:654.54px;width:10px;height:10px"><path d="M1.500 8.500l2.200-2.200 2.800 2.800 6-6L14.700 5.300 6.500 13.500z" fill="#2f6d2f"/></svg><div class="t" style="left:147px;top:653.34px;font-size:11.300px;color:#46719f">rn-news-title-1 (Mobile)</div><div class="abs bdg" style="left:584px;top:650.64px">None</div><div class="t sm" style="left:780.7px;top:653.54px">Custom</div><div class="t sm" style="left:911px;top:653.54px">All</div><div class="t sm" style="left:1042px;top:653.54px">Public</div><div class="t sm" style="left:1173px;top:653.54px">All</div><div class="t" style="left:1304.3px;top:652.94px;width:19.500px;text-align:right;font-size:11.600px;color:#444">253</div><div class="abs" style="left:22px;top:677.4px;width:1310px;height:35.36px;border-top:1px solid #e6e6e6;background:#f8f8f8"></div><div class="abs dh" style="left:32.3px;top:688.2px"></div><div class="abs cb" style="left:58px;top:691px"></div><div class="abs sb2" style="left:85.5px;top:686.9px"><i></i><u></u></div><svg viewBox="0 0 16 16" style="left:91.5px;top:689.9px;width:10px;height:10px"><path d="M1.500 8.500l2.200-2.200 2.800 2.800 6-6L14.700 5.300 6.500 13.500z" fill="#2f6d2f"/></svg><div class="t" style="left:147px;top:688.7px;font-size:11.300px;color:#46719f">rn-news-title-2 (Mobile)</div><div class="abs bdg" style="left:584px;top:686px">None</div><div class="t sm" style="left:780.7px;top:688.9px">Custom</div><div class="t sm" style="left:911px;top:688.9px">All</div><div class="t sm" style="left:1042px;top:688.9px">Public</div><div class="t sm" style="left:1173px;top:688.9px">All</div><div class="t" style="left:1304.3px;top:688.3px;width:19.500px;text-align:right;font-size:11.600px;color:#444">254</div><div class="abs" style="left:0;top:711.5px;width:1363px;height:27px;background:#ebebeb;box-shadow:0 -1px 4px rgba(0,0,0,.12)"></div><div class="abs" style="left:1347px;top:711px;width:16px;height:27px;background:#f3f3f3"></div><svg viewBox="0 0 16 14" style="left:1347px;top:724px;width:16px;height:14px"><path d="M4.500 5L8 8.500 11.500 5" stroke="#505050" stroke-width="1.600" fill="none"/></svg><svg viewBox="0 0 16 16" style="left:8.5px;top:719.5px;width:10px;height:10px"><path d="M9 1.500h5.500V7M14.500 1.500L7.500 8.500" stroke="#555" stroke-width="2" fill="none"/><path d="M11.500 9.500v4.500h-9.500v-9.500h4.500" stroke="#555" stroke-width="1.800" fill="none"/></svg><div class="t" style="left:23px;top:721.7px;font-size:10.300px;color:#6e6e6e">View Site</div><div class="abs" style="left:74.5px;top:720px;width:1px;height:12px;background:#d0d0d0"></div><div class="abs pl" style="left:84px;top:718.5px">0</div><div class="t" style="left:108.5px;top:721.7px;font-size:10.300px;color:#6e6e6e">Visitors</div><div class="abs" style="left:151.5px;top:720px;width:1px;height:12px;background:#d0d0d0"></div><div class="abs pl" style="left:160.5px;top:718.5px">5</div><div class="t" style="left:184.8px;top:721.7px;font-size:10.300px;color:#6e6e6e">Administrators</div><div class="abs" style="left:261px;top:720px;width:1px;height:12px;background:#d0d0d0"></div><div class="abs pl" style="left:269.8px;top:718.5px">0</div><div class="t" style="left:294px;top:721.7px;font-size:10.300px;color:#6e6e6e">Messages</div><div class="abs" style="left:350.5px;top:720px;width:1px;height:12px;background:#d0d0d0"></div><div class="abs" style="left:360px;top:725px;width:11px;height:2px;background:#555"></div><div class="t" style="left:375.5px;top:721.7px;font-size:10.300px;color:#6e6e6e">Log out</div><div class="t" style="left:1198px;top:721.7px;font-size:10.300px;color:#6e6e6e">Joomla! 3.10.9 &nbsp;—&nbsp; © 2022 RN</div>
</div></div>
<div class="tile" id="tile1" style="left:1393px;top:62.7px;width:249px;height:196.9px;"></div><div class="abs" style="left:1455.500px;top:99.500px;width:124px;height:124px;border-radius:50%;border:1px solid #444548"></div><div class="av" style="left:1479.5px;top:123.3px;width:76px;height:76px;background:#0b4a74;font-size:21.5px;line-height:77px;letter-spacing:-.3px">K.BEN</div><div class="t nmx" style="left:1405px;top:229.5px">Kanokwan Saipetchra</div><div class="tile" id="tile2" style="left:1654px;top:62.7px;width:248px;height:196.9px;"></div><svg viewBox="0 0 75 75" style="left:1740.700px;top:123.500px;width:75px;height:75px"><circle cx="37.5" cy="37.5" r="37.3" fill="#fefefe"/>
<path d="M22.500 30C19 40 18.500 52 20.500 59c2.500 2.500 5 1.500 7 .5 1.500 1 3 .5 4-.5 3.500 1.500 8.500 1.500 12 0 1.500 1.200 3 1.200 4 .3 2 1.200 4.500 1.500 6.500-.8 2-7 2-18-2.500-28.500z" fill="#6a432f"/>
<path d="M28.500 47q8 10 17 0l.5 11q-9 3.500-18 0z" fill="#4a2d20"/>
<path d="M25.500 33c0-5 4.500-7.500 11-7.500s11 2.500 11 7.500c0 8-4 15.500-11 15.500s-11-7.500-11-15.500z" fill="#e4cbc1"/>
<path d="M22.300 30.500C21.500 21 27.500 15.500 35.500 15.500S49 21 48.500 30c-4-2.300-8.500-3-13-3s-9 .8-13.200 3.500z" fill="#1b1b1b"/>
<path d="M22.300 30.500c4.200-2.700 8.700-3.500 13.200-3.500s9 .7 13 3l-.2 3.200c-4-2-8.300-2.700-12.800-2.700s-9 .8-12.900 3.300z" fill="#303030"/>
<ellipse cx="42" cy="36" rx="1.900" ry="2.100" fill="#2c1c16"/><circle cx="42" cy="36" r="3.600" stroke="#cfc4c0" stroke-width=".7" fill="none"/><circle cx="31.500" cy="36.500" r="3.600" stroke="#cfc4c0" stroke-width=".7" fill="none"/>
<path d="M29.300 37q2.200-1.300 4.500 0" stroke="#7d5f52" stroke-width=".9" fill="none"/>
<path d="M32.500 42.500q4.300 1.500 8.500 0q-.5 5-4.300 5t-4.200-5z" fill="#9c3237"/><path d="M34.500 45.500q2.300-1.200 4.500 0q-.8 2-2.300 2t-2.200-2z" fill="#e07a7f"/>
</svg><div class="t nmx" style="left:1666px;top:229.5px">Wp MI</div><div class="mute" style="left:1868.5px;top:71px"><svg viewBox="0 0 24 24"><path d="M19 11h-1.7c0 .74-.16 1.43-.43 2.05l1.23 1.23c.56-.98.9-2.09.9-3.28zm-4.02.17c0-.06.02-.11.02-.17V5c0-1.66-1.34-3-3-3S9 3.34 9 5v.18l5.98 5.99zM4.27 3L3 4.27l6.01 6.01V11c0 1.66 1.33 3 2.99 3 .22 0 .44-.03.65-.08l1.66 1.66c-.71.33-1.5.52-2.31.52-2.76 0-5.3-2.1-5.3-5.1H5c0 3.41 2.72 6.23 6 6.72V21h2v-3.28c.91-.13 1.77-.45 2.54-.9L19.73 21 21 19.73 4.27 3z" stroke="#fff" stroke-width=".3"/></svg></div><div class="tile" id="tile3" style="left:1393px;top:272px;width:249px;height:197px;border:4px solid #669df6;border-radius:10px"></div><div class="abs" style="left:1469px;top:322px;width:98px;height:98px;border-radius:50%;background:#5f6368"></div><div class="av" style="left:1479.7px;top:332.8px;width:76px;height:76px;background:#ec407a;font-size:40px;line-height:77px;">S</div><div class="abs" style="left:1607.800px;top:280px;width:26px;height:26px;border-radius:50%;background:#1a73e8"><i class="abs" style="left:5px;top:10px;width:3.500px;height:6px;border-radius:1.750px;background:#fff"></i><i class="abs" style="left:11.250px;top:7px;width:3.500px;height:12px;border-radius:1.750px;background:#fff"></i><i class="abs" style="left:17.500px;top:10px;width:3.500px;height:6px;border-radius:1.750px;background:#fff"></i></div><div class="t nmx" style="left:1405px;top:438.5px">Sasipong M</div><div class="tile" id="tile4" style="left:1654px;top:272.2px;width:248px;height:196.6px;"></div><div class="av" style="left:1740.5px;top:333px;width:75px;height:75px;background:#ab47bc;font-size:40px;line-height:76px;">M</div><div class="t nmx" style="left:1666px;top:438.5px"><span style="letter-spacing:.3px">M155 .Mdsoft</span></div><div class="mute" style="left:1868.5px;top:280.5px"><svg viewBox="0 0 24 24"><path d="M19 11h-1.7c0 .74-.16 1.43-.43 2.05l1.23 1.23c.56-.98.9-2.09.9-3.28zm-4.02.17c0-.06.02-.11.02-.17V5c0-1.66-1.34-3-3-3S9 3.34 9 5v.18l5.98 5.99zM4.27 3L3 4.27l6.01 6.01V11c0 1.66 1.33 3 2.99 3 .22 0 .44-.03.65-.08l1.66 1.66c-.71.33-1.5.52-2.31.52-2.76 0-5.3-2.1-5.3-5.1H5c0 3.41 2.72 6.23 6 6.72V21h2v-3.28c.91-.13 1.77-.45 2.54-.9L19.73 21 21 19.73 4.27 3z" stroke="#fff" stroke-width=".3"/></svg></div><div class="tile" id="tile5" style="left:1393px;top:481.2px;width:249px;height:196.6px;"></div><svg viewBox="0 0 75 75" style="left:1479.800px;top:541.700px;width:75px;height:75px"><defs><clipPath id="cc"><circle cx="37.5" cy="37.5" r="37.5"/></clipPath></defs>
<g clip-path="url(#cc)"><rect width="75" height="75" fill="#a7413c"/>
<g fill="#bd5650"><rect x="8" y="10" width="1.400" height="42"/><rect x="21" y="0" width="1.400" height="10"/><rect x="35" y="0" width="1.400" height="20"/><rect x="46.500" y="0" width="1.400" height="19"/><rect x="57.500" y="4" width="1.400" height="30"/><rect x="67" y="14" width="1.400" height="36"/></g>
<ellipse cx="38.500" cy="59" rx="33" ry="15.800" fill="#e68b1f"/><path d="M6 62q32 22 64 0v14H6z" fill="#d67d17"/><path d="M14 70q24 9 48 0l-4 6H18z" fill="#8f9a55"/>
<path d="M30 24c6-2 14-2 21 0 9 3 14 12 15.500 22 1 6 .5 10-1 13-8 2-20 2-30 1-5-8-8-24-5.500-36z" fill="#f8c4a1"/>
<path d="M28 63c2-4 10-5 20-5.500 9-.5 16-3 18.500-6 1.500 3 .5 7-3 9-8 3.500-25 5-35.500 2.500z" fill="#f9d2b8"/>
<path d="M49.500 35c-4 3-6.500 9-6 16" stroke="#e6a47f" stroke-width=".9" fill="none"/>
<path d="M15.500 28c-1.500 9-.5 22 .5 30 1.500 1.500 3.500 1 4.500 0 1 1.500 3.500 1.500 4.500 0 1-8 3.500-13 7.500-19l-2-11z" fill="#f8c6a6"/>
<path d="M14.200 27c1-4 5-5.500 10.500-5.500s10 2 11 6c1 5-3 11-10.500 11s-12-6-11-11.500z" fill="#fce3d6"/>
<path d="M16 18.500l.8-9.500 5 4.300q3.300-1 6.500.2l5-5.500 1.800 10.500c1.700 6-2.500 10.500-9.300 10.500s-11.500-4.500-9.800-10.500z" fill="#facdb2"/>
<path d="M29.500 13.300l3.800-5.300 1.800 10.500c.8 3.500 0 6-1.800 7.800-2-3-3.500-8-3.800-13z" fill="#eda672"/>
<circle cx="21.300" cy="17" r=".9" fill="#5b93ad"/><circle cx="27" cy="16.800" r=".9" fill="#5b93ad"/>
<path d="M23.300 19.500l1 .9 1-.9" stroke="#e09a8a" stroke-width=".6" fill="none"/>
<path d="M15.300 57.500l1.300-4M18 58.500l.3-4M22 58.500l.3-4M24.500 57.500l.8-3" stroke="#fff" stroke-width="1.300" opacity=".75"/>
</g></svg><div class="t nmx" style="left:1405px;top:647.5px">This Job</div><div class="mute" style="left:1608.5px;top:489.5px"><svg viewBox="0 0 24 24"><path d="M19 11h-1.7c0 .74-.16 1.43-.43 2.05l1.23 1.23c.56-.98.9-2.09.9-3.28zm-4.02.17c0-.06.02-.11.02-.17V5c0-1.66-1.34-3-3-3S9 3.34 9 5v.18l5.98 5.99zM4.27 3L3 4.27l6.01 6.01V11c0 1.66 1.33 3 2.99 3 .22 0 .44-.03.65-.08l1.66 1.66c-.71.33-1.5.52-2.31.52-2.76 0-5.3-2.1-5.3-5.1H5c0 3.41 2.72 6.23 6 6.72V21h2v-3.28c.91-.13 1.77-.45 2.54-.9L19.73 21 21 19.73 4.27 3z" stroke="#fff" stroke-width=".3"/></svg></div><div class="tile" id="tile6" style="left:1654px;top:481.2px;width:248px;height:196.6px;"></div><div class="av" style="left:1740.5px;top:542px;width:75px;height:75px;background:#78909c;font-size:40px;line-height:76px;">M</div><div class="t nmx" style="left:1666px;top:647.5px"><span style="letter-spacing:.3px">Mt52 .Mdsoft</span></div><div class="mute" style="left:1868.5px;top:489.5px"><svg viewBox="0 0 24 24"><path d="M19 11h-1.7c0 .74-.16 1.43-.43 2.05l1.23 1.23c.56-.98.9-2.09.9-3.28zm-4.02.17c0-.06.02-.11.02-.17V5c0-1.66-1.34-3-3-3S9 3.34 9 5v.18l5.98 5.99zM4.27 3L3 4.27l6.01 6.01V11c0 1.66 1.33 3 2.99 3 .22 0 .44-.03.65-.08l1.66 1.66c-.71.33-1.5.52-2.31.52-2.76 0-5.3-2.1-5.3-5.1H5c0 3.41 2.72 6.23 6 6.72V21h2v-3.28c.91-.13 1.77-.45 2.54-.9L19.73 21 21 19.73 4.27 3z" stroke="#fff" stroke-width=".3"/></svg></div><div class="tile" id="tile7" style="left:1473px;top:690.4px;width:350px;height:195.2px;"></div><div class="av" style="left:1595.5px;top:736px;width:105px;height:105px;background:#f4511e;font-size:56px;line-height:106px;">M</div><div class="t nmx" style="left:1485px;top:855.5px"><span class="tw" style="width:22px">คุณ</span></div><div class="mute" style="left:1789px;top:698.5px"><svg viewBox="0 0 24 24"><path d="M19 11h-1.7c0 .74-.16 1.43-.43 2.05l1.23 1.23c.56-.98.9-2.09.9-3.28zm-4.02.17c0-.06.02-.11.02-.17V5c0-1.66-1.34-3-3-3S9 3.34 9 5v.18l5.98 5.99zM4.27 3L3 4.27l6.01 6.01V11c0 1.66 1.33 3 2.99 3 .22 0 .44-.03.65-.08l1.66 1.66c-.71.33-1.5.52-2.31.52-2.76 0-5.3-2.1-5.3-5.1H5c0 3.41 2.72 6.23 6 6.72V21h2v-3.28c.91-.13 1.77-.45 2.54-.9L19.73 21 21 19.73 4.27 3z" stroke="#fff" stroke-width=".3"/></svg></div><div class="t" style="left:22.500px;top:917.300px;font-size:16px;font-weight:bold;transform:scaleX(.885);transform-origin:0 0">14:51</div><div class="abs" style="left:70px;top:916px;width:1px;height:18px;background:#dadce0"></div><div class="t" style="left:83px;top:917.300px;font-size:16px;font-weight:bold;transform:scaleX(.945);transform-origin:0 0">RN Website Training [1]</div>
<div class="cbtn" style="left:823px;width:40px;background:#ea4335;border-radius:20px"><svg viewBox="0 0 24 24" style="left:10px;top:10px;width:20px;height:20px"><path d="M19 11h-1.7c0 .74-.16 1.43-.43 2.05l1.23 1.23c.56-.98.9-2.09.9-3.28zm-4.02.17c0-.06.02-.11.02-.17V5c0-1.66-1.34-3-3-3S9 3.34 9 5v.18l5.98 5.99zM4.27 3L3 4.27l6.01 6.01V11c0 1.66 1.33 3 2.99 3 .22 0 .44-.03.65-.08l1.66 1.66c-.71.33-1.5.52-2.31.52-2.76 0-5.3-2.1-5.3-5.1H5c0 3.41 2.72 6.23 6 6.72V21h2v-3.28c.91-.13 1.77-.45 2.54-.9L19.73 21 21 19.73 4.27 3z" stroke="#fff" stroke-width=".5"/></svg></div><div class="cbtn" style="left:875px;width:40px;background:#ea4335;border-radius:20px"><svg viewBox="0 0 24 24" style="left:9.25px;top:9.25px;width:21.5px;height:21.5px"><path d="M9.56 8l-2-2-4.15-4.14L2 3.27 4.73 6H4c-.55 0-1 .45-1 1v10c0 .55.45 1 1 1h12c.21 0 .39-.08.55-.18L19.730 21l1.410-1.410-8.860-8.860L9.560 8zM5 16V8h1.730l8 8H5zm10-8v2.610l6 6V6.500l-4 4V7c0-.550-.450-1-1-1h-5.610l2 2H15z" stroke="#fff" stroke-width=".4"/></svg></div><div class="cbtn" style="left:927px;width:40px;background:#3c4043;border-radius:20px"><svg viewBox="0 0 24 24" style="left:7.75px;top:7.75px;width:24.5px;height:24.5px"><path d="M21 3H3c-1.110 0-2 .890-2 2v14c0 1.110.890 2 2 2h18c1.110 0 2-.890 2-2V5c0-1.110-.890-2-2-2zm0 16.020H3V4.980h18v14.040zM10 12H8l4-4 4 4h-2v4h-4v-4z" stroke="#fff" stroke-width=".3"/></svg></div><div class="cbtn" style="left:979px;width:40px;background:#3c4043;border-radius:20px"><svg viewBox="0 0 24 24" style="left:8px;top:8px;width:24px;height:24px"><circle cx="12" cy="5.500" r="2.500"/><circle cx="12" cy="12" r="2.500"/><circle cx="12" cy="18.500" r="2.500"/></svg></div><div class="cbtn" style="left:1031px;width:56px;background:#ea4335;border-radius:20px"><svg viewBox="0 0 24 24" style="left:15.5px;top:7.5px;width:25px;height:25px"><path d="M12 9c-1.600 0-3.150.250-4.600.720v3.100c0 .390-.230.740-.560.900-.980.490-1.870 1.120-2.660 1.850-.180.180-.430.280-.700.280-.280 0-.530-.110-.710-.290L.290 13.080c-.180-.170-.290-.420-.290-.700 0-.280.110-.530.290-.710C3.340 8.780 7.460 7 12 7s8.660 1.780 11.710 4.670c.180.180.290.430.290.710 0 .280-.110.530-.290.710l-2.480 2.480c-.180.180-.430.290-.710.290-.270 0-.520-.110-.700-.280-.790-.740-1.690-1.360-2.670-1.850-.330-.160-.560-.500-.560-.900v-3.100C15.150 9.250 13.600 9 12 9z"/></svg></div>
<svg class="bi" viewBox="0 0 24 24" style="left:1719.45px;top:913.05px;width:25.5px;height:25.5px"><path d="M11 7h2v2h-2zm0 4h2v6h-2zm1-9C6.480 2 2 6.480 2 12s4.480 10 10 10 10-4.480 10-10S17.520 2 12 2zm0 18c-4.410 0-8-3.590-8-8s3.590-8 8-8 8 3.590 8 8-3.590 8-8 8z" stroke="#fff" stroke-width=".5"/></svg><svg class="bi" viewBox="0 0 24 24" style="left:1767.5px;top:913.5px;width:25px;height:25px"><path d="M16.670 13.130C18.040 14.060 19 15.320 19 17v3h4v-3c0-2.180-3.570-3.470-6.330-3.870z M15 12c2.210 0 4-1.790 4-4s-1.790-4-4-4c-.470 0-.910.100-1.330.240C14.500 5.270 15 6.580 15 8s-.500 2.730-1.330 3.760c.420.140.860.240 1.330.240z M9 12c2.210 0 4-1.790 4-4s-1.790-4-4-4-4 1.790-4 4 1.790 4 4 4zm0-6c1.100 0 2 .900 2 2s-.900 2-2 2-2-.900-2-2 .900-2 2-2z M9 13c-2.670 0-8 1.340-8 4v3h16v-3c0-2.660-5.330-4-8-4zm6 5H3v-.990C3.200 16.290 6.300 15 9 15s5.800 1.290 6 2v1z" stroke="#fff" stroke-width=".5"/></svg><svg class="bi" viewBox="0 0 24 24" style="left:1816px;top:914px;width:24px;height:24px"><path d="M4 4h16v12H5.170L4 17.170V4m0-2c-1.100 0-1.990.900-1.990 2L2 22l4-4h14c1.100 0 2-.900 2-2V4c0-1.100-.900-2-2-2H4zm2 10h8v2H6v-2zm0-3h12v2H6V9zm0-3h12v2H6V6z" stroke="#fff" stroke-width=".5"/></svg><svg class="bi" viewBox="0 0 24 24" style="left:1863.9px;top:913.3px;width:25px;height:25px"><path d="M12 2l-5.500 9h11L12 2zm0 3.840L13.930 9h-3.870L12 5.840zM17.500 13c-2.490 0-4.500 2.010-4.500 4.500s2.010 4.500 4.500 4.500 4.500-2.010 4.500-4.500-2.010-4.500-4.500-4.500zm0 7c-1.380 0-2.500-1.120-2.500-2.500s1.120-2.500 2.500-2.500 2.500 1.120 2.500 2.500-1.120 2.500-2.500 2.500zM3 21.500h8v-8H3v8zm2-6h4v4H5v-4z" stroke="#fff" stroke-width=".5"/></svg><div class="av" style="left:1781px;top:897px;width:20px;height:20px;background:#5f6368;font-size:11.500px;font-weight:bold;line-height:20.500px">8</div><div class="abs" style="left:1832.500px;top:911.500px;width:9px;height:9px;border-radius:50%;background:#8ab4f8"></div><svg viewBox="0 0 12 19" style="left:1412px;top:887px;width:12px;height:19px"><path d="M1 1v14l3.300-3 2.700 6 2.200-1-2.700-5.800H11z" fill="#fff" stroke="#000" stroke-width="1"/></svg></body></html>
